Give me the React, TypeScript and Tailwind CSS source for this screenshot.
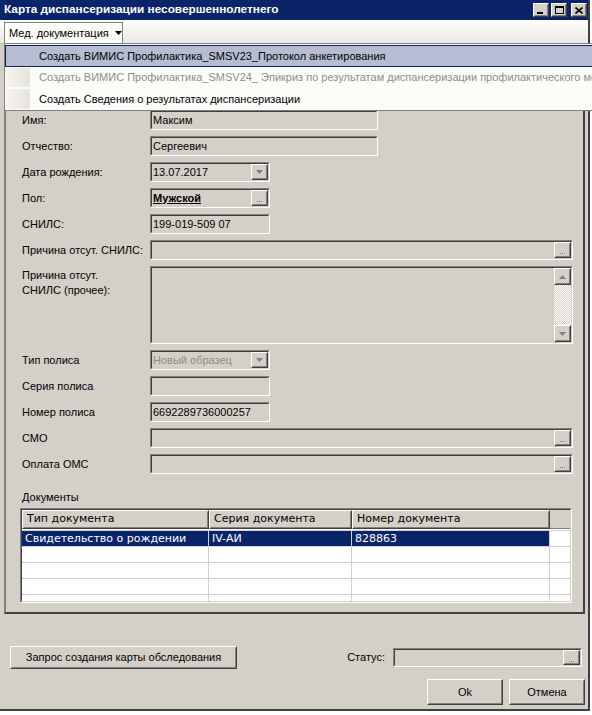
import type { ReactNode } from "react";

const font = { fontFamily: '"Liberation Sans", Arial, sans-serif' };

function Sunken({ className = "", children }: { className?: string; children?: ReactNode }) {
  return (
    <div className={`border border-t-[#808080] border-l-[#808080] border-b-white border-r-white ${className}`}>
      <div className="h-full w-full border border-t-[#404040] border-l-[#404040] border-b-[#d4d0c8] border-r-[#d4d0c8] flex items-center relative">
        {children}
      </div>
    </div>
  );
}

function Raised({ className = "", children }: { className?: string; children?: ReactNode }) {
  return (
    <div className={`border border-t-white border-l-white border-b-[#404040] border-r-[#404040] bg-[#d4d0c8] ${className}`}>
      <div className="h-full w-full border border-t-[#d4d0c8] border-l-[#d4d0c8] border-b-[#808080] border-r-[#808080] flex items-center justify-center">
        {children}
      </div>
    </div>
  );
}

function Dots() {
  return (
    <div className="flex gap-[1px] mt-[7px]">
      <div className="w-[1px] h-[1px] bg-[#808080]" />
      <div className="w-[1px] h-[1px] bg-[#808080]" />
      <div className="w-[1px] h-[1px] bg-[#808080]" />
    </div>
  );
}

function DotsBtn() {
  return (
    <Raised className="absolute right-0 top-0 w-[17px] h-[16px]">
      <Dots />
    </Raised>
  );
}

function ArrowBtn() {
  return (
    <Raised className="absolute right-0 top-0 w-[17px] h-[16px]">
      <svg width="7" height="4" viewBox="0 0 7 4">
        <path d="M0 0h7L3.5 4z" fill="#808080" />
      </svg>
    </Raised>
  );
}

function Row({ label, children, h = "h-[20px]" }: { label?: ReactNode; children?: ReactNode; h?: string }) {
  return (
    <div className={`flex ${h}`}>
      <div className="w-[128px] text-[11px] text-black leading-[14px] flex items-center">{label}</div>
      {children}
    </div>
  );
}

const menuItems = [
  { text: "Создать ВИМИС Профилактика_SMSV23_Протокол анкетирования", active: true },
  { text: "Создать ВИМИС Профилактика_SMSV24_ Эпикриз по результатам диспансеризации профилактического мед", disabled: true },
  { text: "Создать Сведения о результатах диспансеризации" },
];

export default function App() {
  return (
    <div className="w-[592px] h-[715px] bg-white relative overflow-hidden" style={font}>
      <div className="w-[590px] h-[711px] bg-[#d4d0c8] border-r-2 border-b-2 border-r-[#404040] border-b-[#404040] flex flex-col">
        {/* title bar */}
        <div className="h-[20px] bg-[#0a246a] flex items-center justify-between pl-[4px] pr-[1px] shrink-0">
          <span className="text-white font-bold text-[11.8px] whitespace-nowrap">Карта диспансеризации несовершеннолетнего</span>
          <div className="flex gap-[2px]">
            <Raised className="w-[16px] h-[14px]">
              <div className="w-[6px] h-[2px] bg-black mt-[6px] -ml-[2px]" />
            </Raised>
            <Raised className="w-[16px] h-[14px]">
              <div className="w-[9px] h-[8px] border border-black border-t-2" />
            </Raised>
            <Raised className="w-[16px] h-[14px] ml-[2px]">
              <svg width="8" height="7" viewBox="0 0 8 7">
                <path d="M0.5 0.5L7.5 6.5M7.5 0.5L0.5 6.5" stroke="black" strokeWidth="1.6" />
              </svg>
            </Raised>
          </div>
        </div>

        {/* menu bar */}
        <div className="h-[23px] bg-gradient-to-b from-white to-[#ebe9e2] shrink-0 pt-[2px]">
          <div className="ml-[4px] w-[119px] h-[21px] border border-b-0 border-[#808080] bg-[#fcfcf9] flex items-center pl-[4px] text-[11px] text-black whitespace-nowrap">
            Мед. документация
            <svg width="7" height="4" viewBox="0 0 7 4" className="ml-[6px]">
              <path d="M0 0h7L3.5 4z" fill="black" />
            </svg>
          </div>
        </div>

        {/* main panel */}
        <div className="ml-[4px] w-[581px] h-[571px] border-l-2 border-b-2 border-r-2 border-l-[#808080] border-b-[#404040] border-r-[#404040] pt-[15px] pl-[16px] shrink-0 flex flex-col">
          <div className="flex flex-col gap-[6px]">
            <Row>
              <Sunken className="w-[120px] h-[20px]" />
            </Row>
            <Row>
              <Sunken className="w-[228px] h-[20px]" />
            </Row>
            <Row label="Имя:">
              <Sunken className="w-[228px] h-[20px]">
                <span className="text-[11px] pl-[1px]">Максим</span>
              </Sunken>
            </Row>
            <Row label="Отчество:">
              <Sunken className="w-[228px] h-[20px]">
                <span className="text-[11px] pl-[1px]">Сергеевич</span>
              </Sunken>
            </Row>
            <Row label="Дата рождения:">
              <Sunken className="w-[120px] h-[20px]">
                <span className="text-[11px] pl-[1px]">13.07.2017</span>
                <ArrowBtn />
              </Sunken>
            </Row>
            <Row label="Пол:">
              <Sunken className="w-[120px] h-[20px]">
                <span className="text-[11px] pl-[1px] font-bold underline">Мужской</span>
                <DotsBtn />
              </Sunken>
            </Row>
            <Row label="СНИЛС:">
              <Sunken className="w-[120px] h-[20px]">
                <span className="text-[11px] pl-[1px]">199-019-509 07</span>
              </Sunken>
            </Row>
            <Row label="Причина отсут. СНИЛС:">
              <Sunken className="w-[423px] h-[20px]">
                <DotsBtn />
              </Sunken>
            </Row>
            <div className="flex h-[78px]">
              <div className="w-[128px] text-[11px] leading-[15px] pt-[2px]">
                Причина отсут.
                <br />
                СНИЛС (прочее):
              </div>
              <Sunken className="w-[423px] h-[78px]">
                <div className="absolute right-0 top-0 bottom-0 w-[17px] flex flex-col">
                  <Raised className="w-[17px] h-[17px] shrink-0">
                    <svg width="7" height="4" viewBox="0 0 7 4">
                      <path d="M0 4h7L3.5 0z" fill="#808080" />
                    </svg>
                  </Raised>
                  <div className="flex-1 bg-[repeating-conic-gradient(#ffffff_0_25%,#d4d0c8_0_50%)] bg-[length:2px_2px]" />
                  <Raised className="w-[17px] h-[17px] shrink-0">
                    <svg width="7" height="4" viewBox="0 0 7 4">
                      <path d="M0 0h7L3.5 4z" fill="#808080" />
                    </svg>
                  </Raised>
                </div>
              </Sunken>
            </div>
            <Row label="Тип полиса">
              <Sunken className="w-[120px] h-[20px]">
                <span className="text-[11px] pl-[1px] text-[#8c8c8c]">Новый образец</span>
                <ArrowBtn />
              </Sunken>
            </Row>
            <Row label="Серия полиса">
              <Sunken className="w-[120px] h-[20px]" />
            </Row>
            <Row label="Номер полиса">
              <Sunken className="w-[120px] h-[20px]">
                <span className="text-[11px] pl-[1px]">6692289736000257</span>
              </Sunken>
            </Row>
            <Row label="СМО">
              <Sunken className="w-[423px] h-[20px]">
                <DotsBtn />
              </Sunken>
            </Row>
            <Row label="Оплата ОМС">
              <Sunken className="w-[423px] h-[20px]">
                <DotsBtn />
              </Sunken>
            </Row>
          </div>

          <div className="text-[11px] mt-[16px] h-[14px] leading-[14px]">Документы</div>

          {/* documents table */}
          <div
            className="-ml-[2px] mt-[4px] w-[552px] h-[95px] border border-t-[#808080] border-l-[#808080] border-b-white border-r-white"
            style={{ fontFamily: '"DejaVu Sans", Verdana, sans-serif' }}
          >
            <div className="h-full border border-t-[#404040] border-l-[#404040] border-b-[#d4d0c8] border-r-[#d4d0c8] bg-white overflow-hidden">
              <div className="flex h-[19px] text-[11px]">
                <Raised className="w-[187px] h-[19px]">
                  <span className="w-full pl-[3px] text-left">Тип документа</span>
                </Raised>
                <Raised className="w-[143px] h-[19px]">
                  <span className="w-full pl-[3px] text-left">Серия документа</span>
                </Raised>
                <Raised className="w-[198px] h-[19px]">
                  <span className="w-full pl-[3px] text-left">Номер документа</span>
                </Raised>
                <div className="w-[20px] h-[19px] bg-[#d4d0c8] border-b border-[#808080]" />
              </div>
              <div className="h-[2px] border-b border-[#d0d0d0]" />
              {[0, 1, 2, 3, 4].map((i) => (
                <div key={i} className="flex h-[16px] border-b border-[#d0d0d0] text-[11px] leading-[15px]">
                  <div className={`w-[187px] border-r border-[#d0d0d0] pl-[3px] ${i === 0 ? "bg-[#0a246a] text-white" : ""}`}>
                    {i === 0 ? "Свидетельство о рождении" : ""}
                  </div>
                  <div className={`w-[143px] border-r border-[#d0d0d0] pl-[3px] ${i === 0 ? "bg-[#0a246a] text-white" : ""}`}>
                    {i === 0 ? "IV-АИ" : ""}
                  </div>
                  <div className={`w-[198px] border-r border-[#d0d0d0] pl-[3px] ${i === 0 ? "bg-[#0a246a] text-white" : ""}`}>
                    {i === 0 ? "828863" : ""}
                  </div>
                  <div className="w-[20px]" />
                </div>
              ))}
            </div>
          </div>
        </div>

        {/* bottom area */}
        <div className="flex items-center mt-[32px] pr-[6px]">
          <Raised className="ml-[10px] w-[227px] h-[23px]">
            <span className="text-[11px]">Запрос создания карты обследования</span>
          </Raised>
          <div className="flex-1" />
          <span className="text-[11px] mr-[8px]">Статус:</span>
          <Sunken className="w-[189px] h-[19px]">
            <Raised className="absolute right-0 top-0 w-[17px] h-[15px]">
              <Dots />
            </Raised>
          </Sunken>
        </div>
        <div className="flex justify-end gap-[6px] mt-[10px] pr-[3px]">
          <Raised className="w-[76px] h-[26px]">
            <span className="text-[11px]">Ok</span>
          </Raised>
          <Raised className="w-[76px] h-[26px]">
            <span className="text-[11px]">Отмена</span>
          </Raised>
        </div>
      </div>

      {/* open dropdown menu */}
      <div className="absolute left-[4px] top-[43px] w-[600px] h-[68px] bg-[#fcfcf9] border border-[#808080] pt-[1px] flex flex-col">
        {menuItems.map((m) => (
          <div
            key={m.text}
            className={`h-[22px] flex items-center text-[11px] whitespace-nowrap ${
              m.active ? "bg-[#b6bdd2] border border-[#0a246a]" : "border border-transparent"
            }`}
          >
            <div
              className={`w-[24px] h-full shrink-0 ${m.active ? "" : "bg-gradient-to-r from-[#f6f5f1] to-[#e4e2da]"}`}
            />
            <span className={`pl-[9px] ${m.disabled ? "text-[#8d8d8d]" : "text-black"}`}>{m.text}</span>
          </div>
        ))}
      </div>
    </div>
  );
}
